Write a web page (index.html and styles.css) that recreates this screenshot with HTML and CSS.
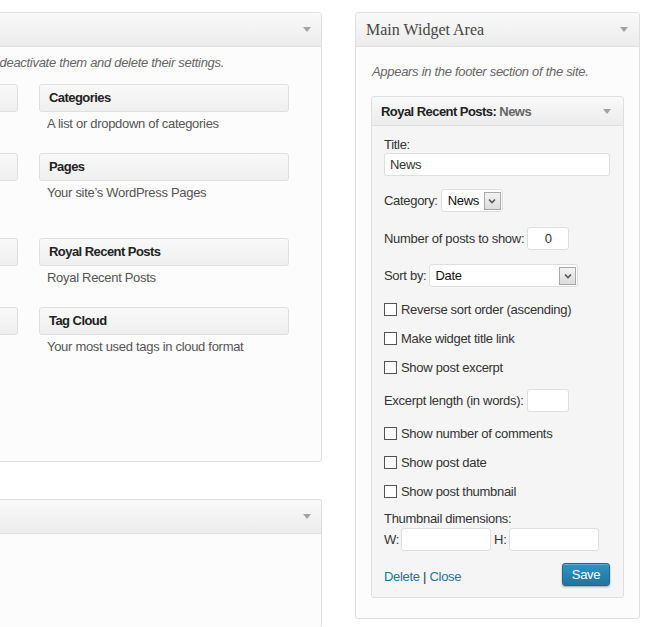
FILE: index.html
```html
<!DOCTYPE html>
<html lang="en">
<head>
<meta charset="utf-8">
<title>Widgets</title>
<link rel="stylesheet" href="styles.css">
</head>
<body>
<div class="page">
  <div class="left-col">
    <section class="panel panel-available">
      <header class="panel-head">
        <span></span>
        <span class="toggle"></span>
      </header>
      <div class="panel-desc"><span>deactivate them and delete their settings.</span></div>
      <div class="widget-grid">
        <div class="widget-item">
          <div class="widget-title"></div>
        </div>
        <div class="widget-item">
          <div class="widget-title">Categories</div>
          <div class="widget-desc">A list or dropdown of categories</div>
        </div>
        <div class="widget-item tall">
          <div class="widget-title"></div>
        </div>
        <div class="widget-item">
          <div class="widget-title">Pages</div>
          <div class="widget-desc">Your site’s WordPress Pages</div>
        </div>
        <div class="widget-item">
          <div class="widget-title"></div>
        </div>
        <div class="widget-item">
          <div class="widget-title">Royal Recent Posts</div>
          <div class="widget-desc">Royal Recent Posts</div>
        </div>
        <div class="widget-item">
          <div class="widget-title"></div>
        </div>
        <div class="widget-item">
          <div class="widget-title">Tag Cloud</div>
          <div class="widget-desc">Your most used tags in cloud format</div>
        </div>
      </div>
    </section>
    <section class="panel panel-inactive">
      <header class="panel-head">
        <span></span>
        <span class="toggle"></span>
      </header>
    </section>
  </div>

  <section class="panel sidebar">
    <header class="panel-head sidebar-head">
      <h3 class="panel-title">Main Widget Area</h3>
      <span class="toggle"></span>
    </header>
    <div class="sidebar-body">
      <p class="sidebar-desc">Appears in the footer section of the site.</p>
      <div class="widget">
        <div class="widget-head">
          <h4 class="widget-name">Royal Recent Posts: <span class="in-title">News</span></h4>
          <span class="toggle"></span>
        </div>
        <div class="widget-body">
          <div class="lbl">Title:</div>
          <input class="text-input title-input" type="text" value="News">

          <div class="row row-cat">
            <span>Category:</span>
            <span class="select sel-cat"><span class="sel-val">News</span><span class="sel-arrow"><svg width="8" height="6" viewBox="0 0 8 6"><path d="M1 1.5 L4 4.5 L7 1.5" fill="none" stroke="#555" stroke-width="1.6"/></svg></span></span>
          </div>

          <div class="row row-num">
            <span>Number of posts to show:</span>
            <input class="text-input small-input" type="text" value="0">
          </div>

          <div class="row row-sort">
            <span>Sort by:</span>
            <span class="select sel-sort"><span class="sel-val">Date</span><span class="sel-arrow"><svg width="8" height="6" viewBox="0 0 8 6"><path d="M1 1.5 L4 4.5 L7 1.5" fill="none" stroke="#555" stroke-width="1.6"/></svg></span></span>
          </div>

          <label class="check-row check-first"><input class="cb" type="checkbox">Reverse sort order (ascending)</label>
          <label class="check-row"><input class="cb" type="checkbox">Make widget title link</label>
          <label class="check-row"><input class="cb" type="checkbox">Show post excerpt</label>

          <div class="row row-excerpt">
            <span>Excerpt length (in words):</span>
            <input class="text-input small-input" type="text" value="">
          </div>

          <label class="check-row check-second"><input class="cb" type="checkbox">Show number of comments</label>
          <label class="check-row"><input class="cb" type="checkbox">Show post date</label>
          <label class="check-row"><input class="cb" type="checkbox">Show post thumbnail</label>

          <div class="lbl lbl-thumb">Thumbnail dimensions:</div>
          <div class="row row-dims">
            <span>W:</span>
            <input class="text-input dim-input dim-w" type="text" value="">
            <span class="dim-h">H:</span>
            <input class="text-input dim-input" type="text" value="">
          </div>

          <div class="widget-foot">
            <span class="foot-links"><a class="link" href="#">Delete</a> <span class="sep">|</span> <a class="link" href="#">Close</a></span>
            <button class="btn-save" type="button">Save</button>
          </div>
        </div>
      </div>
    </div>
  </section>
</div>
</body>
</html>
```

FILE: styles.css
```css
* { box-sizing: border-box; }

html, body { overflow: hidden; }

body {
  margin: 0;
  background: #fff;
  font-family: "Liberation Sans", Arial, sans-serif;
  font-size: 13px;
  color: #333;
  letter-spacing: -0.3px;
}

.page {
  display: flex;
  align-items: flex-start;
  padding-top: 12px;
}

.left-col {
  flex: none;
  width: 575px;
  margin-left: -253px;
  display: flex;
  flex-direction: column;
  gap: 37px;
}

.panel {
  border: 1px solid #dfdfdf;
  border-radius: 3px;
  background: #fcfcfc;
}

.panel-available { height: 450px; }
.panel-inactive { height: 129px; border-bottom: 0; }

.panel-head {
  height: 34px;
  border-bottom: 1px solid #dfdfdf;
  background: linear-gradient(#f9f9f9, #ececec);
  display: flex;
  align-items: center;
  justify-content: space-between;
  padding: 0 10px 0 10px;
  border-radius: 3px 3px 0 0;
}

.sidebar-head { padding-right: 11px; }

.panel-title {
  margin: 0;
  font-family: "Liberation Serif", Georgia, serif;
  font-size: 16px;
  font-weight: normal;
  color: #464646;
  letter-spacing: 0;
}

.toggle {
  width: 0;
  height: 0;
  border-left: 4px solid transparent;
  border-right: 4px solid transparent;
  border-top: 5px solid #a3a3a3;
}

.panel-desc {
  display: flex;
  justify-content: flex-end;
  padding: 7px 97px 0 0;
  line-height: 17px;
  font-style: italic;
  color: #666;
  white-space: nowrap;
}

.widget-grid {
  display: grid;
  grid-template-columns: 250px 250px;
  column-gap: 21px;
  padding: 0 32px 0 20px;
  margin-top: 13px;
}

.widget-item { margin-bottom: 17px; }
.widget-item.tall { min-height: 68px; }

.widget-title {
  height: 28px;
  border: 1px solid #dfdfdf;
  border-radius: 3px;
  background: linear-gradient(#f9f9f9, #efefef);
  padding: 0 9px;
  font-weight: bold;
  line-height: 26px;
  color: #222;
  letter-spacing: -0.55px;
}

.widget-desc {
  padding: 4px 8px;
  line-height: 16px;
  color: #555;
}

/* Sidebar */
.sidebar {
  flex: none;
  width: 285px;
  height: 607px;
  margin-left: 33px;
}

.sidebar-body { padding: 16px 15px 0; }

.sidebar-desc {
  margin: 0 0 16px 1px;
  line-height: 17px;
  font-style: italic;
  color: #666;
}

.widget {
  border: 1px solid #dfdfdf;
  border-radius: 3px;
  background: #f5f5f5;
}

.widget-head {
  height: 29px;
  border-bottom: 1px solid #dfdfdf;
  background: linear-gradient(#f9f9f9, #ececec);
  display: flex;
  align-items: center;
  justify-content: space-between;
  padding: 0 12px 0 9px;
  border-radius: 3px 3px 0 0;
}

.widget-name {
  margin: 0;
  font-size: 13px;
  font-weight: bold;
  color: #222;
  letter-spacing: -0.55px;
}

.in-title { color: #666; }

.widget-body { padding: 10px 13px 11px 12px; }

.lbl { line-height: 17px; }

.text-input {
  display: block;
  height: 23px;
  margin: 0;
  border: 1px solid #dfdfdf;
  border-radius: 3px;
  background: #fff;
  font: inherit;
  letter-spacing: inherit;
  color: #333;
  padding: 0 5px;
  outline: none;
}

.title-input { width: 226px; }

.row {
  display: flex;
  align-items: center;
  height: 23px;
}

.row-cat { margin-top: 13px; }
.row-num { margin-top: 15px; }
.row-sort { margin-top: 14px; }
.row-excerpt { margin-top: 13px; }
.row-dims { margin-top: 1px; }

.small-input {
  width: 42px;
  margin-left: 3px;
  text-align: center;
}

.dim-input { width: 90px; margin-left: 3px; }
.dim-w { margin-left: 2px; }
.dim-h { margin-left: 3px; }

.select {
  display: flex;
  align-items: center;
  justify-content: space-between;
  height: 23px;
  margin-left: 3px;
  border: 1px solid #dfdfdf;
  border-radius: 3px;
  background: #fff;
  padding: 0 1px 0 6px;
  color: #111;
}

.sel-cat { width: 62px; }
.sel-sort { width: 149px; padding-left: 5px; }

.sel-arrow {
  width: 17px;
  height: 18px;
  border: 1px solid #a8a8a8;
  background: linear-gradient(#f3f3f3, #dcdcdc);
  display: flex;
  align-items: center;
  justify-content: center;
}

.sel-arrow svg { display: block; }

.check-row {
  display: flex;
  align-items: center;
  height: 18px;
  margin-top: 11px;
}

.check-first { margin-top: 13px; }
.check-second { margin-top: 12px; }

.cb {
  appearance: none;
  -webkit-appearance: none;
  flex: none;
  width: 13px;
  height: 13px;
  margin: 0 4px 0 0;
  border: 1px solid #555;
  border-radius: 0;
  background: #fff;
}

.lbl-thumb { margin-top: 10px; }

.widget-foot {
  display: flex;
  justify-content: space-between;
  align-items: center;
  height: 23px;
  margin-top: 12px;
}

.foot-links { padding-top: 3px; }

.link {
  color: #21759b;
  text-decoration: none;
}

.sep { color: #333; }

.btn-save {
  width: 48px;
  height: 23px;
  padding: 0;
  border: 1px solid #1e6a8d;
  border-radius: 3px;
  background: linear-gradient(#2a95c5, #21759b);
  color: #fff;
  font: inherit;
  letter-spacing: inherit;
  box-shadow: inset 0 1px 0 rgba(120, 200, 230, 0.5), 0 1px 2px rgba(0, 0, 0, 0.35);
}
```
